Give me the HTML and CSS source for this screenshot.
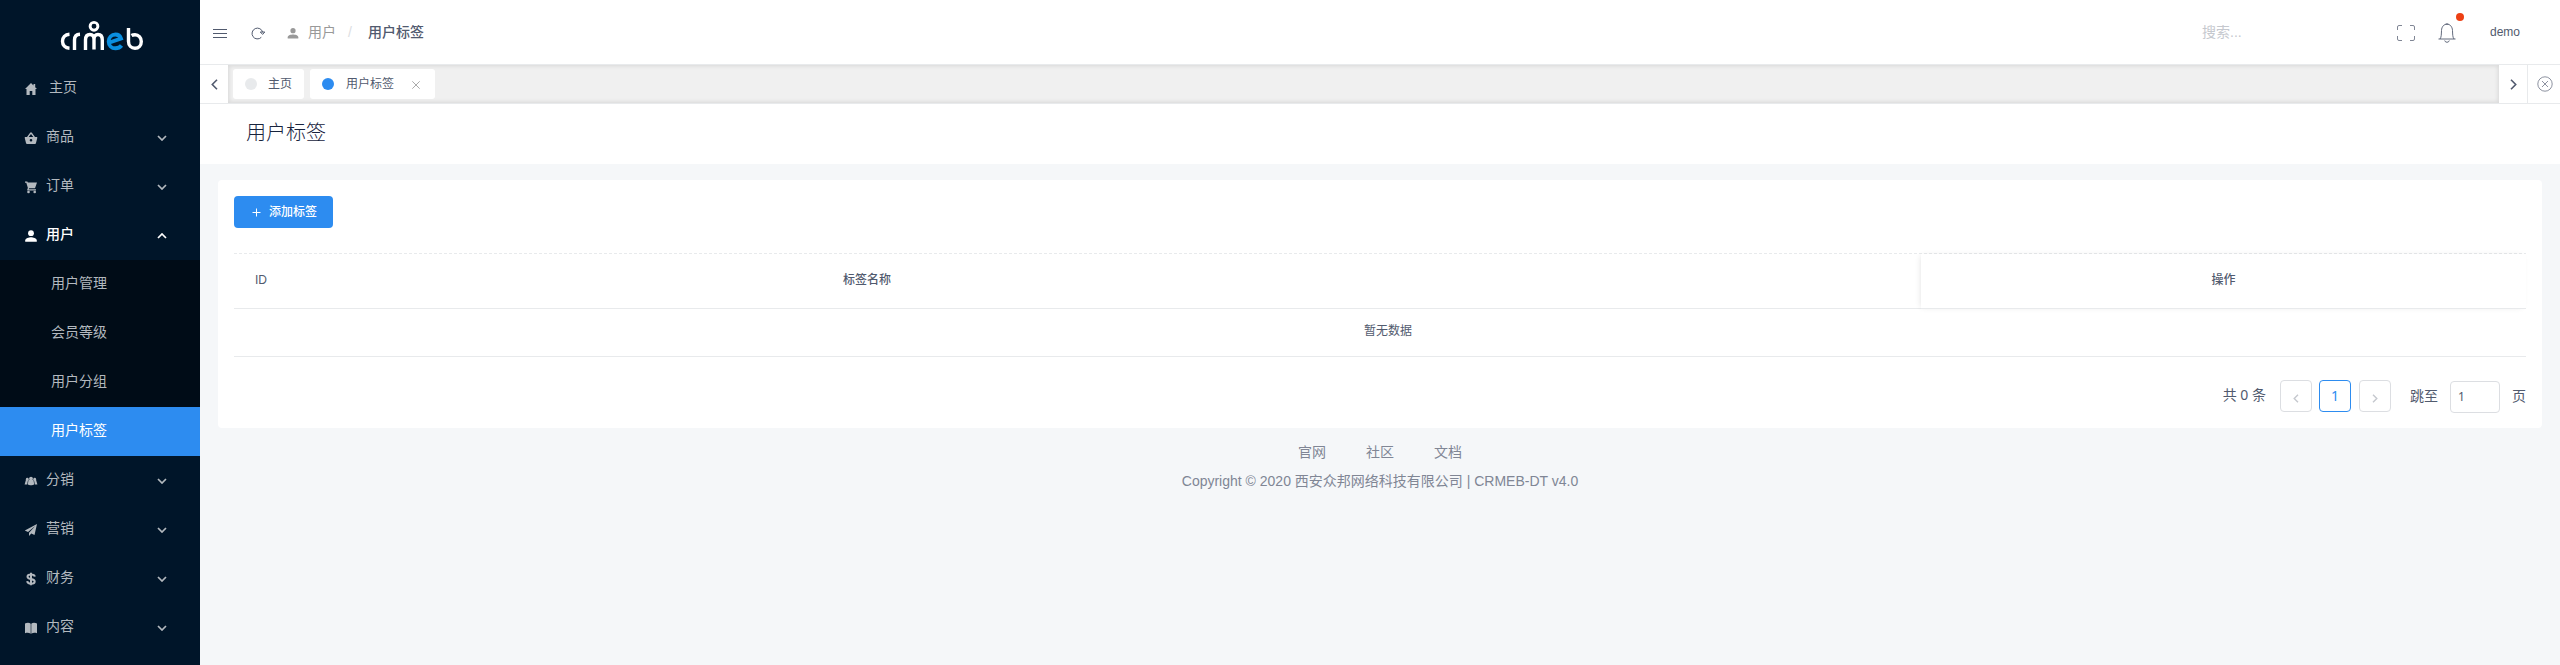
FILE: index.html
```html
<!DOCTYPE html>
<html lang="zh-CN">
<head>
<meta charset="utf-8">
<title>用户标签</title>
<link rel="stylesheet" href="styles.css">
</head>
<body>
<div class="layout">
  <aside class="sidebar">
    <div class="logo">
      <svg width="84" height="32" viewBox="0 0 84 32" fill="none" stroke="#fff" stroke-width="3.4">
        <path d="M9.500 14.200C5 14.500 2.500 17.500 2.500 21.300S5 28 9.500 28.300"/>
        <path d="M14.500 30V20C14.500 16.500 16.500 14.500 20 14.300"/>
        <path d="M25.500 30V20C25.500 16 27.500 14.500 30 14.500S34 16 34 19.500V29.500M34 19.500C34 16 35.500 14.500 38 14.500S42.300 16 42.300 20V30"/>
        <circle cx="34" cy="6.300" r="3.900" stroke-width="2.900"/>
        <path d="M49.500 22.500L61 18.500C60 15.500 57.500 14.500 55.500 14.500C51.500 14.500 48.700 17.500 48.700 21.400S51.500 28.300 55.500 28.300C58 28.300 60 27.500 61.500 25.500" stroke="#0a8fe0" stroke-width="3.900"/>
        <path d="M68.500 8V21.500C68.500 25.500 71.300 28.300 75 28.300S81.300 25.300 81.300 21.500S78.500 14.700 75 14.700C73.500 14.700 72.300 15 71.500 15.500"/>
      </svg>
    </div>
    <nav class="menu">
      <div class="item home"><svg class="mi" viewBox="0 0 14 14"><path d="M7 1L1 7H2.500V13H5.700V9H8.300V13H11.500V7H13L11.200 5.200V2H9.500V3.500Z"/></svg><span>主页</span></div>
      <div class="item"><svg class="mi" viewBox="0 0 14 14"><path fill-rule="evenodd" d="M.8 6H3L6.300 1.500H7.700L11 6H13.200V7.300L12 12C11.900 12.700 11.500 13 11 13H3C2.500 13 2.100 12.700 2 12L.8 7.300ZM4.700 6H9.300L7 2.900ZM7 8A1.300 1.300 0 1 0 7 10.600A1.300 1.300 0 1 0 7 8"/></svg><span>商品</span><svg class="chev" viewBox="0 0 10 6"><path d="M1 1L5 5L9 1"/></svg></div>
      <div class="item"><svg class="mi" viewBox="0 0 14 14"><path d="M1 1.500H3.300L3.900 2.500H13L11 8.200H5.200L4.700 9.300H12V10.600H3.300V9.200L3.900 8L2.300 2.800H1Z"/><circle cx="4.500" cy="12" r="1.300"/><circle cx="10.700" cy="12" r="1.300"/></svg><span>订单</span><svg class="chev" viewBox="0 0 10 6"><path d="M1 1L5 5L9 1"/></svg></div>
      <div class="item open"><svg class="mi" viewBox="0 0 14 14"><circle cx="7" cy="4.200" r="2.900"/><path d="M1.200 12.700V11.500C1.200 9.200 5 8.200 7 8.200S12.800 9.200 12.800 11.500V12.700Z"/></svg><span>用户</span><svg class="chev" viewBox="0 0 10 6"><path d="M1 5L5 1L9 5"/></svg></div>
      <div class="submenu">
        <div class="sub">用户管理</div>
        <div class="sub">会员等级</div>
        <div class="sub">用户分组</div>
        <div class="sub current">用户标签</div>
      </div>
      <div class="item"><svg class="mi" viewBox="0 0 14 14"><circle cx="7" cy="4.700" r="1.900"/><circle cx="3.300" cy="5.200" r="1.400"/><circle cx="10.700" cy="5.200" r="1.400"/><path d="M4.500 6H9.500L10.200 10.200C9 11.500 5 11.500 3.800 10.200ZM1.900 6H4L3.200 10.500H.6ZM10 6H12.100L13.400 10.500H10.800Z"/></svg><span>分销</span><svg class="chev" viewBox="0 0 10 6"><path d="M1 1L5 5L9 1"/></svg></div>
      <div class="item"><svg class="mi" viewBox="0 0 14 14"><path d="M13 1L.8 7.600L4 9L11.500 2.800L5 9.700V13L7.300 10.600L10.500 12Z"/></svg><span>营销</span><svg class="chev" viewBox="0 0 10 6"><path d="M1 1L5 5L9 1"/></svg></div>
      <div class="item"><svg class="mi money" viewBox="0 0 14 14"><path d="M10.800 4.600C10.500 3.200 9 2.500 7 2.500S3.500 3.300 3.500 4.700C3.500 6.300 5.200 6.600 7 7S10.700 7.800 10.700 9.500S9 11.700 7 11.700S3.400 10.900 3.200 9.200M7 .8V13.300"/></svg><span>财务</span><svg class="chev" viewBox="0 0 10 6"><path d="M1 1L5 5L9 1"/></svg></div>
      <div class="item"><svg class="mi" viewBox="0 0 14 14"><path d="M1 2.500C3 1.600 5.500 1.600 6.700 2.700V12.700C5 11.600 3 11.600 1 12.200ZM13 2.500C11 1.600 8.500 1.600 7.300 2.700V12.700C9 11.600 11 11.600 13 12.200Z"/></svg><span>内容</span><svg class="chev" viewBox="0 0 10 6"><path d="M1 1L5 5L9 1"/></svg></div>
    </nav>
  </aside>
  <div class="main">
    <header class="header">
      <svg class="burger" width="14" height="11" viewBox="0 0 14 11"><path d="M0 1.500H14M0 5.500H14M0 9.500H14"/></svg>
      <svg class="reload" width="14" height="14" viewBox="0 0 14 14"><path d="M10.300 11.300A5.400 5.400 0 1 1 11.700 6.300M9.300 6H13.800L11.600 8.400Z"/></svg>
      <div class="crumbs">
        <svg width="14" height="14" viewBox="0 0 14 14"><circle cx="7" cy="4.700" r="2.600"/><path d="M1.700 12.500V11.300C1.700 9.200 5 8.500 7 8.500S12.300 9.200 12.300 11.300V12.500Z"/></svg>
        <span class="crumb">用户</span><span class="slash">/</span><span class="crumb now">用户标签</span>
      </div>
      <div class="tools">
        <span class="search">搜索...</span>
        <svg class="full" width="18" height="16" viewBox="0 0 18 16"><path d="M.5 5V2Q.5 .5 2 .5H5M13 .5H16Q17.500 .5 17.500 2V5M17.500 11V14Q17.500 15.500 16 15.500H13M5 15.500H2Q.5 15.500 .5 14V11"/></svg>
        <div class="bell">
          <svg width="18" height="20" viewBox="0 0 18 20"><path d="M.5 16H17.500M2 16C3.500 14 3.300 11 3.500 7.500C3.700 3.500 6 1.200 9 1.200S14.300 3.500 14.500 7.500C14.700 11 14.500 14 16 16M6.700 17.500Q7.200 19.300 9 19.300T11.300 17.500"/><path d="M7.700 1H10.300"/></svg>
          <i class="dot"></i>
        </div>
        <span class="user">demo</span>
      </div>
    </header>
    <div class="tabs">
      <div class="nav-btn"><svg width="7" height="11" viewBox="0 0 7 11"><path d="M6 .8L1.300 5.500L6 10.200"/></svg></div>
      <div class="track">
        <div class="tab"><i></i><span>主页</span></div>
        <div class="tab active"><i></i><span>用户标签</span><svg width="8" height="8" viewBox="0 0 8 8"><path d="M.3 .3L7.700 7.700M7.700 .3L.3 7.700"/></svg></div>
      </div>
      <div class="nav-btn"><svg width="7" height="11" viewBox="0 0 7 11"><path d="M1 .8L5.700 5.500L1 10.200"/></svg></div>
      <div class="close-all"><svg width="16" height="16" viewBox="0 0 16 16"><circle cx="8" cy="8" r="7.200"/><path d="M5 5L11 11M11 5L5 11"/></svg></div>
    </div>
    <h1 class="title">用户标签</h1>
    <section class="card">
      <button class="add"><svg width="9" height="9" viewBox="0 0 9 9"><path d="M4.500 .5V8.500M.5 4.500H8.500"/></svg><span>添加标签</span></button>
      <div class="divider"></div>
      <div class="thead">
        <div class="th id">ID</div>
        <div class="th name">标签名称</div>
        <div class="th action">操作</div>
      </div>
      <div class="empty">暂无数据</div>
      <div class="pager">
        <span class="total">共 0 条</span>
        <span class="page off"><svg width="6" height="9" viewBox="0 0 6 9"><path d="M5 .7L1.200 4.500L5 8.300"/></svg></span>
        <span class="page on">1</span>
        <span class="page off next"><svg width="6" height="9" viewBox="0 0 6 9"><path d="M1 .7L4.800 4.500L1 8.300"/></svg></span>
        <span class="jump">跳至</span>
        <span class="jump-input">1</span>
        <span class="unit">页</span>
      </div>
    </section>
    <footer class="footer">
      <div class="links"><span>官网</span><span>社区</span><span>文档</span></div>
      <div class="copy">Copyright © 2020 西安众邦网络科技有限公司 | CRMEB-DT v4.0</div>
    </footer>
  </div>
</div>
</body>
</html>
```

FILE: styles.css
```css
* { box-sizing: border-box; }
body {
  margin: 0;
  font: 14px/20px "Liberation Sans", "Noto Sans CJK SC", sans-serif;
  color: #515a6e;
  background: #f5f7f9;
}
svg { display: block; flex: none; fill: none; }
.layout { display: flex; height: 665px; overflow: hidden; }

.sidebar { width: 200px; flex: none; background: #001529; color: #b3b9bf; }
.logo { height: 64px; padding: 20px 0 0 60px; }
.item { height: 49px; display: flex; align-items: center; padding: 0 33px 0 24px; }
.item span { flex: 1; margin-left: 8px; padding-bottom: 3px; }
.item.home span { margin-left: 11px; }
.mi { width: 14px; height: 14px; fill: currentColor; margin-top: 1px; }
.mi.money { fill: none; stroke: currentColor; stroke-width: 2; }
.chev { width: 10px; height: 6px; stroke: currentColor; stroke-width: 1.7; }
.item.open { color: #fff; font-weight: 500; }
.submenu { background: #000c17; }
.sub { height: 49px; line-height: 46px; padding-left: 51px; }
.sub.current { background: #2d8cf0; color: #fff; }

.main { flex: 1; min-width: 0; }
.header { height: 65px; background: #fff; border-bottom: 1px solid #e8eaec; display: flex; align-items: center; padding-left: 13px; }
.burger { stroke: #515a6e; stroke-width: 1; margin-top: 2px; }
.reload { stroke: #515a6e; margin: 2px 0 0 24px; }
.crumbs { display: flex; align-items: center; margin-left: 21px; color: #999; }
.crumbs svg { fill: #999; margin: 1px 8px 0 0; }
.slash { margin: 0 15px 0 12px; color: #dcdee2; width: 5px; }
.crumb.now { color: #515a6e; font-weight: 500; }
.tools { margin-left: auto; display: flex; align-items: center; }
.search { width: 195px; color: #c5c8ce; }
.full { stroke: #808695; margin-top: 2px; }
.bell { position: relative; margin: 2px 0 0 23px; }
.bell svg { stroke: #515a6e; stroke-width: .9; }
.dot { position: absolute; width: 8px; height: 8px; border-radius: 50%; background: #ed4014; left: 18px; top: -10px; }
.user { font-size: 12px; width: 70px; margin-left: 34px; }

.tabs { height: 39px; display: flex; background: #fff; border-bottom: 1px solid #e8eaec; }
.nav-btn { width: 28px; display: flex; align-items: center; justify-content: center; }
.nav-btn svg { stroke: #515a6e; stroke-width: 1.6; }
.track { flex: 1; display: flex; gap: 6px; padding: 4px 5px; background: #f0f0f0; box-shadow: inset 0 0 4px 1px rgba(0,0,0,.1); }
.tab { height: 30px; display: flex; align-items: center; background: #fff; border-radius: 3px; font-size: 12px; padding: 0 12px; }
.tab i { width: 12px; height: 12px; border-radius: 50%; background: #e8eaec; margin-right: 11px; }
.tab.active { padding-right: 15px; }
.tab.active i { background: #2d8cf0; margin-right: 12px; }
.tab svg { stroke: #aaa; margin: 2px 0 0 18px; }
.close-all { width: 33px; border-left: 1px solid #e8eaec; display: flex; align-items: center; padding-left: 9px; }
.close-all svg { stroke: #808695; stroke-width: .9; }

.title { margin: 0; height: 60px; background: #fff; color: #17233d; font-size: 20px; font-weight: 300; line-height: 59px; padding-left: 46px; }

.card { margin: 16px 18px 0; height: 248px; background: #fff; border-radius: 4px; padding: 16px; }
.add { display: flex; align-items: center; width: 99px; height: 32px; border: 0; border-radius: 4px; background: #2d8cf0; color: #fff; padding: 0 0 0 18px; font: 500 12px/20px "Liberation Sans", "Noto Sans CJK SC", sans-serif; }
.add span { padding-bottom: 1px; }
.add svg { stroke: #fff; margin-right: 8px; }
.divider { height: 1px; margin-top: 25px; background: repeating-linear-gradient(90deg, #e8eaec 0 3px, transparent 3px 5px); }
.thead { display: flex; height: 55px; font-size: 12px; font-weight: 500; line-height: 53px; }
.th { border-bottom: 1px solid #e8eaec; }
.id { width: 588px; padding-left: 21px; }
.name { flex: 1; padding-left: 21px; }
.action { width: 605px; text-align: center; box-shadow: -2px 0 6px -2px rgba(0,0,0,.12); }
.empty { height: 48px; line-height: 45px; border-bottom: 1px solid #e8eaec; text-align: center; font-size: 12px; padding-left: 16px; }
.pager { display: flex; justify-content: flex-end; align-items: center; height: 32px; margin-top: 23px; font-family: "Noto Sans", "Noto Sans CJK SC", sans-serif; }
.total { margin-right: 14px; padding-bottom: 2px; }
.page { width: 32px; height: 32px; border: 1px solid #dcdee2; border-radius: 4px; display: flex; align-items: center; justify-content: center; }
.off svg { stroke: #c5c8ce; stroke-width: 1.4; margin-top: 4px; }
.on { margin: 0 8px 0 7px; border-color: #2d8cf0; color: #2d8cf0; }
.jump { margin: 0 12px 0 19px; padding-bottom: 1px; }
.jump-input { width: 50px; height: 32px; border: 1px solid #dcdee2; border-radius: 4px; padding-left: 7px; line-height: 29px; font-size: 12px; margin-bottom: -2px; }
.unit { margin-left: 12px; padding-bottom: 1px; }

.footer { color: #808695; text-align: center; padding-top: 14px; }
.links { display: flex; justify-content: center; gap: 40px; }
.copy { margin-top: 9px; }
```
